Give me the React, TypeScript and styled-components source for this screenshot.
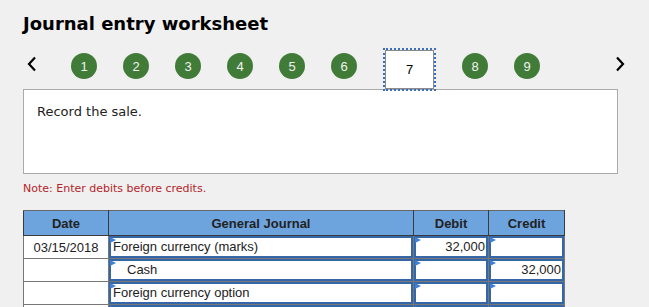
import React from 'react';
import styled, { createGlobalStyle } from 'styled-components';

const GlobalStyle = createGlobalStyle`
  body {
    margin: 0;
    background: #f0f0f0;
    font-family: 'DejaVu Sans', Verdana, sans-serif;
  }
`;

const Page = styled.div`
  padding: 12px 0 0 23px;
`;

const Title = styled.h1`
  margin: 0;
  font-size: 18px;
  line-height: 24px;
  font-weight: 700;
  color: #000;
`;

const NavRow = styled.div`
  display: flex;
  align-items: center;
  width: 602px;
  margin-top: 5px;
`;

const Chevron = styled.svg<{ $right?: boolean }>`
  width: 10px;
  height: 16px;
  margin-bottom: 4px;
  margin-left: ${(p) => (p.$right ? 'auto' : '4px')};
`;

const Steps = styled.div`
  display: flex;
  align-items: center;
  gap: 26px;
  margin-left: 34px;
`;

const Step = styled.div`
  width: 26px;
  height: 26px;
  border-radius: 50%;
  background: #417b38;
  color: #f2f2f2;
  display: flex;
  align-items: center;
  justify-content: center;
  font-family: 'Liberation Sans', Arial, sans-serif;
  font-size: 13px;
`;

const CurrentStep = styled.div`
  position: relative;
  z-index: 1;
  box-sizing: border-box;
  width: 49px;
  height: 39px;
  margin: 9px 2px 2px;
  background: #fff;
  border: 1px solid #8a8a8a;
  outline: 2px dotted #3a6fc0;
  display: flex;
  align-items: center;
  justify-content: center;
  font-family: 'Liberation Sans', Arial, sans-serif;
  font-size: 13px;
  color: #000;
`;

const Prompt = styled.div`
  box-sizing: border-box;
  width: 595px;
  height: 85px;
  margin-top: -2px;
  padding: 14px 13px;
  background: #fff;
  border: 1px solid #aaa;
  font-size: 13px;
  line-height: 16px;
  color: #222;
`;

const Note = styled.p`
  margin: 8px 0 0;
  font-size: 11px;
  line-height: 14px;
  color: #b3262a;
`;

const Table = styled.table`
  margin-top: 14px;
  border-collapse: collapse;
  table-layout: fixed;
  font-family: 'Liberation Sans', Arial, sans-serif;
  font-size: 13px;
  color: #222;
  border: 1px solid #666;
`;

const Head = styled.th<{ $w: number }>`
  width: ${(p) => p.$w}px;
  height: 24px;
  padding: 0;
  background: #6ea4de;
  border: 1px solid #3a3a3a;
  border-top-color: #666;
  font-weight: 700;
  text-align: center;
`;

const DateCell = styled.td`
  padding: 0;
  height: 22px;
  background: #fff;
  border: 1px solid #777;
  text-align: center;
`;

const InputCell = styled.td`
  padding: 0;
  background: #fff;
  border: 1px solid #777;
`;

const Field = styled.div<{ $indent?: boolean; $num?: boolean }>`
  position: relative;
  box-sizing: border-box;
  height: 22px;
  border: 2px solid #3566a8;
  padding: 0 ${(p) => (p.$num ? '1px' : '2px')} 0
    ${(p) => (p.$indent ? '16px' : '2px')};
  line-height: 18px;
  text-align: ${(p) => (p.$num ? 'right' : 'left')};
  white-space: nowrap;

  &::before {
    content: '';
    position: absolute;
    top: -1px;
    left: -1px;
    width: 0;
    height: 0;
    border-top: 3px solid transparent;
    border-bottom: 3px solid transparent;
    border-left: 6px solid #3f80d8;
  }
`;

type Row = {
  date: string;
  account: string;
  indent?: boolean;
  debit: string;
  credit: string;
};

const rows: Row[] = [
  { date: '03/15/2018', account: 'Foreign currency (marks)', debit: '32,000', credit: '' },
  { date: '', account: 'Cash', indent: true, debit: '', credit: '32,000' },
  { date: '', account: 'Foreign currency option', debit: '', credit: '' },
  { date: '', account: '', debit: '', credit: '' },
  { date: '', account: '', debit: '', credit: '' },
];

export default function App(): React.ReactElement {
  return (
    <Page>
      <GlobalStyle />
      <Title>Journal entry worksheet</Title>
      <NavRow>
        <Chevron viewBox="0 0 10 16">
          <polyline points="8,1.5 2,8 8,14.5" fill="none" stroke="#000" strokeWidth="2.2" />
        </Chevron>
        <Steps>
          {[1, 2, 3, 4, 5, 6].map((n) => (
            <Step key={n}>{n}</Step>
          ))}
          <CurrentStep>7</CurrentStep>
          {[8, 9].map((n) => (
            <Step key={n}>{n}</Step>
          ))}
        </Steps>
        <Chevron $right viewBox="0 0 10 16">
          <polyline points="2,1.5 8,8 2,14.5" fill="none" stroke="#000" strokeWidth="2.2" />
        </Chevron>
      </NavRow>
      <Prompt>Record the sale.</Prompt>
      <Note>Note: Enter debits before credits.</Note>
      <Table>
        <thead>
          <tr>
            <Head $w={84}>Date</Head>
            <Head $w={304}>General Journal</Head>
            <Head $w={74}>Debit</Head>
            <Head $w={75}>Credit</Head>
          </tr>
        </thead>
        <tbody>
          {rows.map((r, i) => (
            <tr key={i}>
              <DateCell>{r.date}</DateCell>
              <InputCell>
                <Field $indent={r.indent}>{r.account}</Field>
              </InputCell>
              <InputCell>
                <Field $num>{r.debit}</Field>
              </InputCell>
              <InputCell>
                <Field $num>{r.credit}</Field>
              </InputCell>
            </tr>
          ))}
        </tbody>
      </Table>
    </Page>
  );
}
